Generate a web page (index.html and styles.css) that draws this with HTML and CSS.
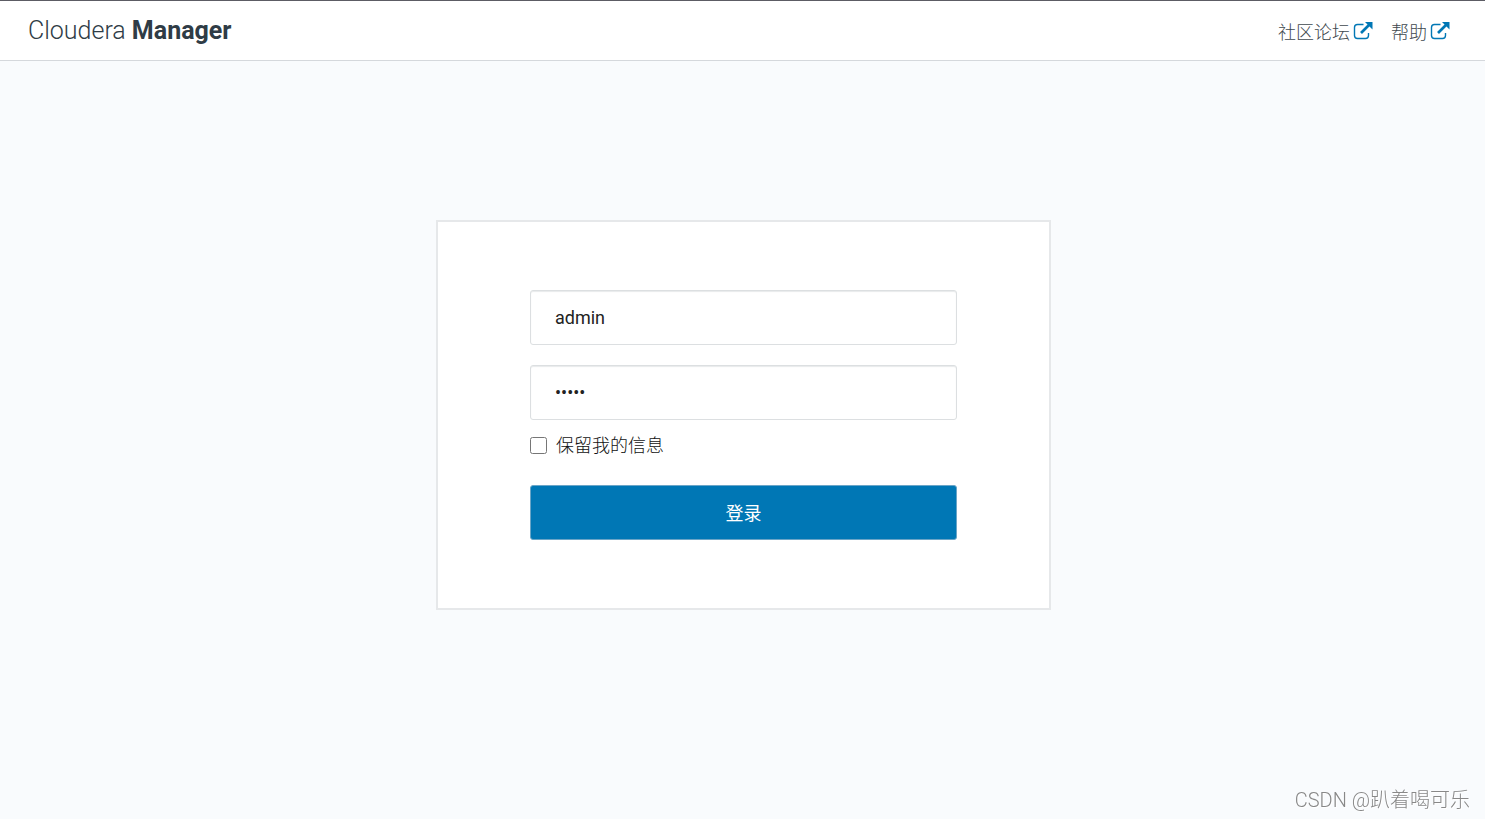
FILE: index.html
```html
<!DOCTYPE html>
<html lang="zh-CN">
<head>
    <meta charset="utf-8">
    <meta name="viewport" content="width=device-width, initial-scale=1">
    <title>Cloudera Manager</title>
    <link rel="stylesheet" href="styles.css">
</head>
<body>
<header class="navbar">
    <a class="brand" href="#">Cloudera <b>Manager</b></a>
    <nav class="nav-links">
        <a href="#">社区论坛
            <svg class="icon" viewBox="0 0 20 20" aria-hidden="true">
                <path class="icon-box" d="M10.500 3.500H4.500Q1.500 3.500 1.500 6.500V14.500Q1.500 17.500 4.500 17.500H12.500Q15.500 17.500 15.500 14.500V12"/>
                <path class="icon-line" d="M8 12L16 4"/>
                <path class="icon-head" d="M12 1H19.500V8.500Z"/>
            </svg>
        </a>
        <a href="#">帮助
            <svg class="icon" viewBox="0 0 20 20" aria-hidden="true">
                <path class="icon-box" d="M10.500 3.500H4.500Q1.500 3.500 1.500 6.500V14.500Q1.500 17.500 4.500 17.500H12.500Q15.500 17.500 15.500 14.500V12"/>
                <path class="icon-line" d="M8 12L16 4"/>
                <path class="icon-head" d="M12 1H19.500V8.500Z"/>
            </svg>
        </a>
    </nav>
</header>

<main class="content">
    <form class="login" onsubmit="return false">
        <input class="field" type="text" name="username" value="admin" aria-label="用户名">
        <input class="field" type="password" name="password" value="admin" aria-label="密码">
        <div class="remember">
            <input type="checkbox" id="remember">
            <label for="remember">保留我的信息</label>
        </div>
        <button class="btn" type="submit">登录</button>
    </form>
</main>

<div class="watermark">CSDN @趴着喝可乐</div>
</body>
</html>
```
FILE: styles.css
```css
* {
    box-sizing: border-box;
}
body {
    margin: 0;
    min-height: 100vh;
    background: #f9fbfd;
    color: #111;
    font-family: Roboto, "Noto Sans CJK SC", sans-serif;
    font-size: 18px;
    font-weight: 300;
}

/* header */
.navbar {
    display: flex;
    justify-content: space-between;
    align-items: center;
    height: 61px;
    padding: 0 35px 0 28px;
    background: #fff;
    border-top: 1px solid #5c5c64;
    border-bottom: 1px solid #d5d8dc;
}
.brand {
    color: #2f3c46;
    font-size: 25px;
    text-decoration: none;
}
.brand b {
    font-weight: 700;
}
.nav-links {
    display: flex;
    gap: 18px;
}
.nav-links a {
    display: flex;
    align-items: center;
    gap: 3px;
    color: #40484e;
    text-decoration: none;
}
.icon {
    width: 20px;
    height: 20px;
    fill: none;
    stroke: #0077b5;
}
.icon-box {
    stroke-width: 1.4;
}
.icon-line {
    stroke-width: 2.6;
}
.icon-head {
    fill: #0077b5;
    stroke: none;
}

/* login box */
.content {
    display: flex;
    justify-content: center;
    padding: 159px 16px 0 18px;
}
.login {
    width: 615px;
    padding: 68px 92px;
    background: #fff;
    border: 2px solid #e6e8ea;
}
.field {
    display: block;
    width: 100%;
    height: 55px;
    margin-bottom: 20px;
    padding: 0 24px;
    border: 1px solid #dcdfe1;
    border-radius: 3px;
    box-shadow: inset 0 1px 1px #e8eaeb;
    background: #fff;
    color: #222;
    font-family: inherit;
    font-size: 18px;
    font-weight: 400;
}
.remember {
    display: flex;
    align-items: center;
    gap: 9px;
    height: 50px;
    margin: -20px 0 15px;
}
.remember input {
    width: 17px;
    height: 17px;
    margin: 0;
}
.remember label {
    padding-bottom: 3px;
}
.btn {
    display: block;
    width: 100%;
    height: 55px;
    padding: 0 0 2px;
    border: 1px solid #6aa5c7;
    border-radius: 3px;
    background: #0077b5;
    color: #fff;
    font-family: inherit;
    font-size: 18px;
    cursor: pointer;
}

.watermark {
    position: fixed;
    right: 15px;
    bottom: 6px;
    color: #888;
    font-size: 20px;
    text-shadow: 1px 1px 0 #fff;
}
```
